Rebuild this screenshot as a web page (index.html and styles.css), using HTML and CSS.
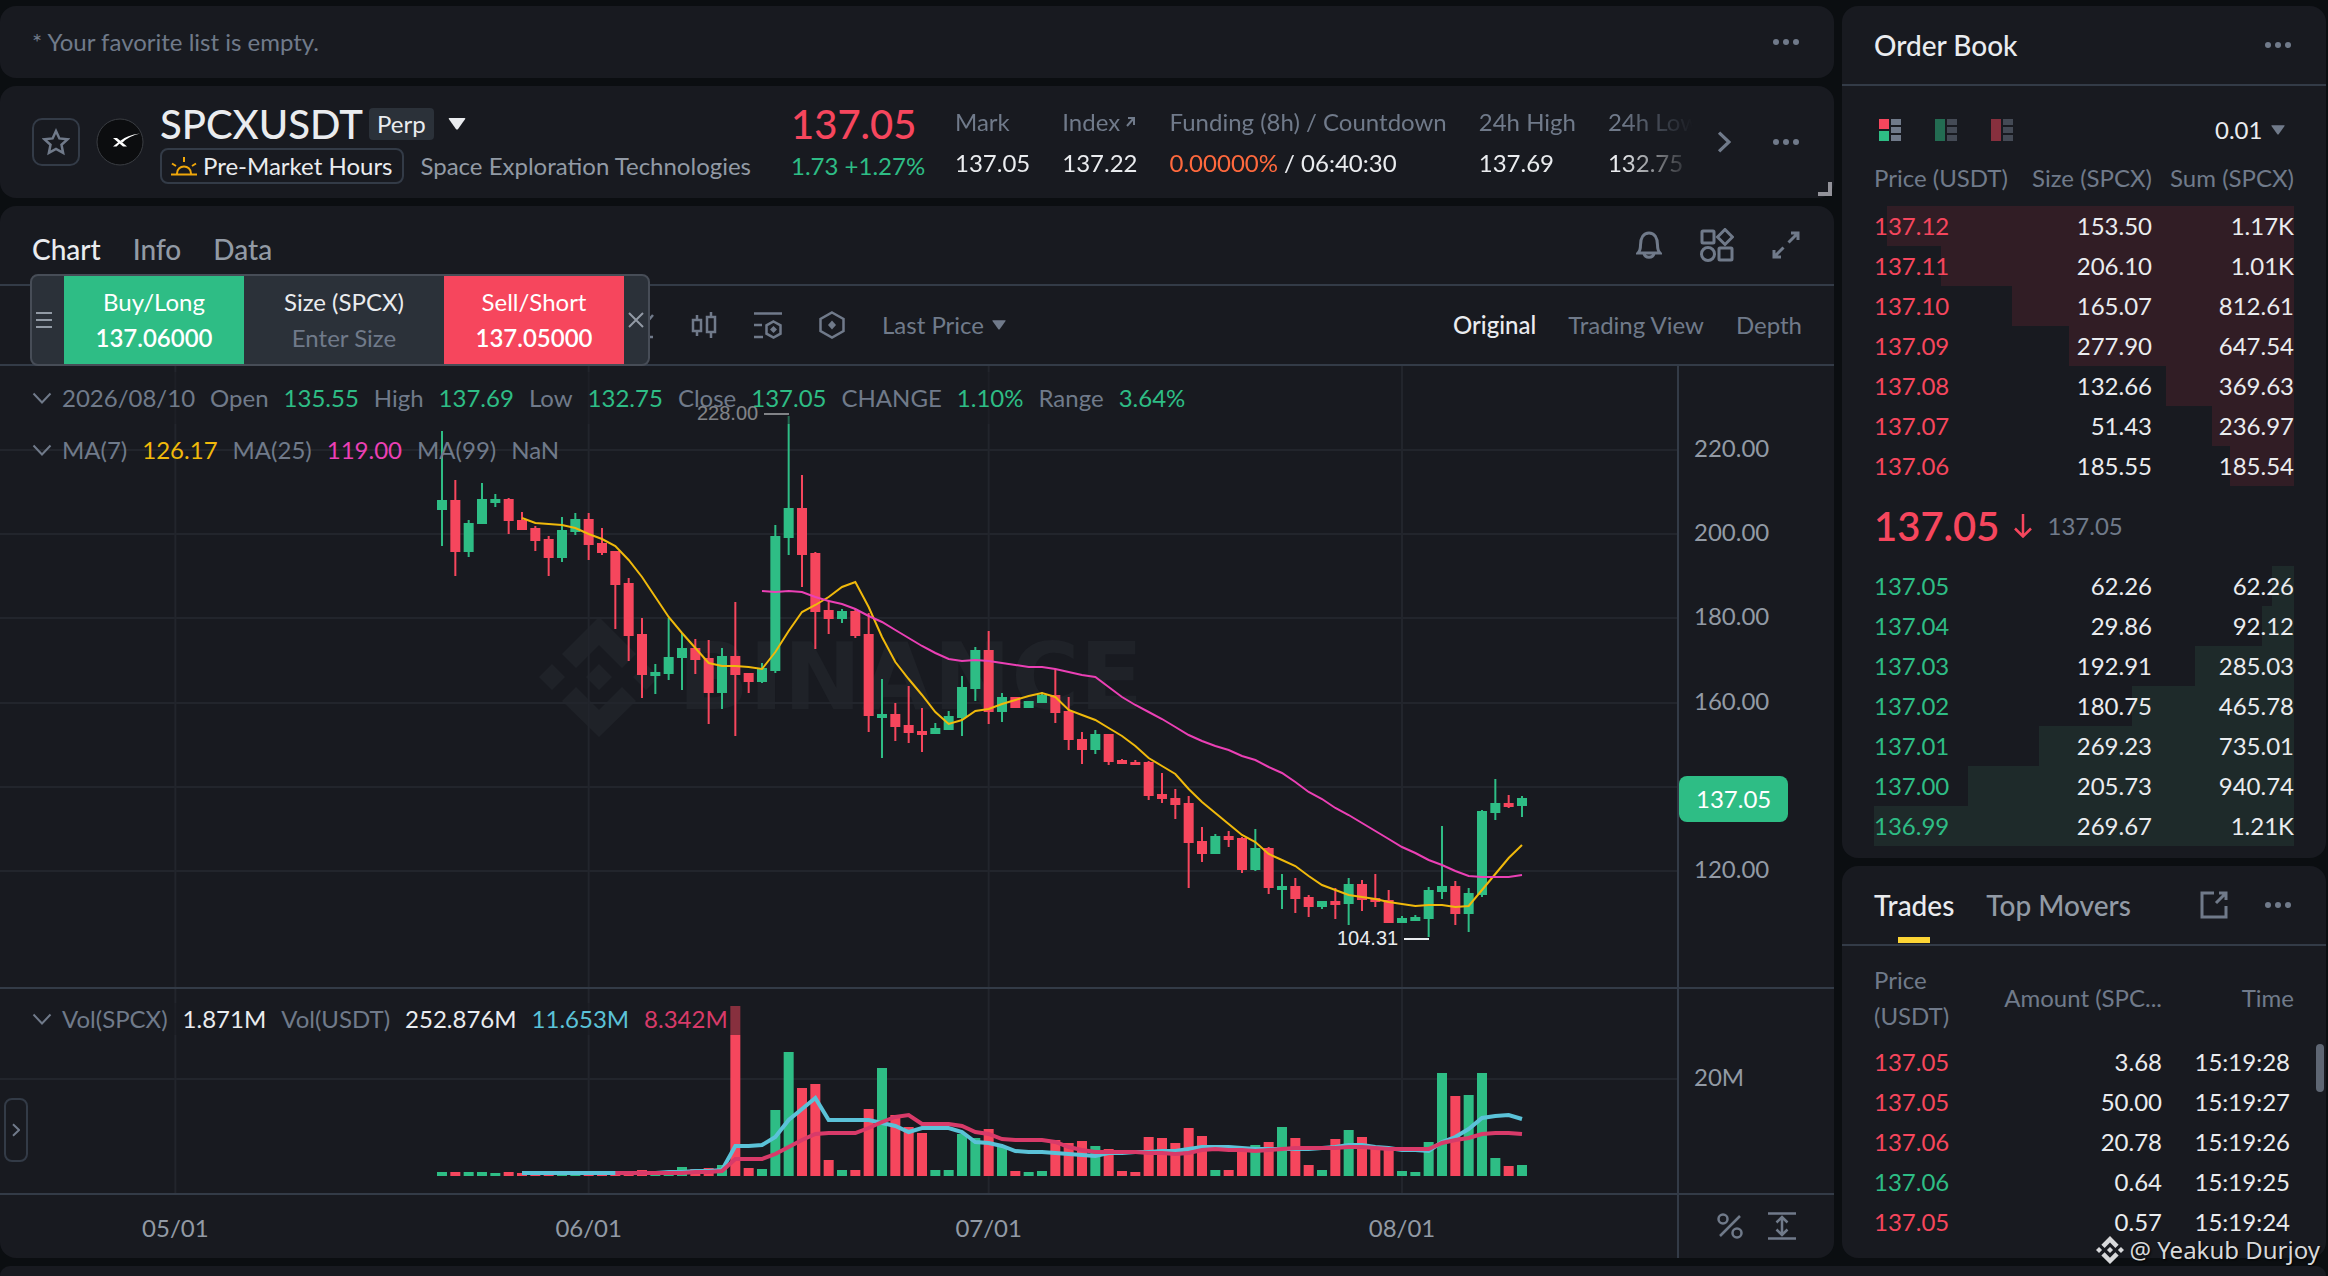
FILE: index.html
```
<!DOCTYPE html>
<html lang="en">
<head>
    <meta charset="UTF-8">
    <meta name="viewport" content="width=device-width, initial-scale=1.0">
    <title>SPCXUSDT Perp | Futures</title>
    <link rel="stylesheet" href="styles.css">
</head>
<body>
    <!-- Shared icons -->
    <svg class="sprite" aria-hidden="true">
        <symbol id="dots" viewBox="0 0 26 6">
            <circle cx="3" cy="3" r="3"/><circle cx="13" cy="3" r="3"/><circle cx="23" cy="3" r="3"/>
        </symbol>
        <symbol id="caret" viewBox="0 0 16 11"><path d="M1 0h14q1 0 .5 1L9 10q-1 1.200-2 0L.5 1Q0 0 1 0z"/></symbol>
        <symbol id="chevron" viewBox="0 0 20 12"><path d="M1.500 1.500 10 10.500l8.500-9"/></symbol>
        <symbol id="binance" viewBox="0 0 120 120">
            <path d="M60 0l37 37-14 14-23-23-23 23-14-14zM13 47l13 13-13 13L0 60zM60 47l13 13-13 13-13-13zM107 47l13 13-13 13-13-13zM37 70l23 23 23-23 14 14-37 36-37-36z"/>
        </symbol>
    </svg>

    <div class="layout">
        <!-- Favorites bar -->
        <section class="panel favorites">
            <p>* Your favorite list is empty.</p>
            <button class="icon-btn" aria-label="Favorites menu"><svg class="dots"><use href="#dots"/></svg></button>
        </section>

        <!-- Ticker -->
        <section class="panel ticker">
            <button class="star-btn" aria-label="Add to favorites">
                <svg width="28" height="28" viewBox="0 0 28 28"><path d="M14 3l3.400 7.400 8.100.9-6 5.500 1.600 8.100-7.100-4-7.100 4 1.600-8.100-6-5.500 8.100-.9z"/></svg>
            </button>
            <svg class="coin" width="48" height="48" viewBox="0 0 48 48" aria-hidden="true">
                <circle cx="24" cy="24" r="23"/>
                <path class="coin-x" d="M17 20h4l10 8.500h-4zM17 28.500l5.500-4.500 1.500 1.300-3.500 3.200z"/>
                <path class="coin-x" d="M24 23q7-6 20-7.500-11 2.500-17.500 9z"/>
            </svg>
            <div class="pair">
                <div class="pair-row">
                    <h1>SPCXUSDT</h1>
                    <span class="perp">Perp</span>
                    <button class="icon-btn pair-open" aria-label="Choose pair"><svg class="caret-lg"><use href="#caret"/></svg></button>
                </div>
                <div class="pair-row">
                    <span class="hours">
                        <svg width="26" height="20" viewBox="0 0 26 20" aria-hidden="true">
                            <path d="M0 18.500h26M6 17.500c0-9.500 14-9.500 14 0M13 1v5M1 7.500l4 2.500M25 7.500L21 10"/>
                        </svg>
                        Pre-Market Hours
                    </span>
                    <span class="company">Space Exploration Technologies</span>
                </div>
            </div>
            <div class="last">
                <strong class="down">137.05</strong>
                <span class="up">1.73 +1.27%</span>
            </div>
            <dl class="stats">
                <div><dt>Mark</dt><dd>137.05</dd></div>
                <div>
                    <dt>Index <svg width="9" height="10" viewBox="0 0 9 10" aria-hidden="true"><path d="M1 9l7-8M2 1h6v7"/></svg></dt>
                    <dd>137.22</dd>
                </div>
                <div><dt>Funding (8h) / Countdown</dt><dd><span class="funding">0.00000%</span> / 06:40:30</dd></div>
                <div><dt>24h High</dt><dd>137.69</dd></div>
                <div><dt>24h Low</dt><dd>132.75</dd></div>
            </dl>
            <button class="icon-btn stats-next" aria-label="More stats"><svg class="chevron-right"><use href="#chevron"/></svg></button>
            <button class="icon-btn" aria-label="Ticker menu"><svg class="dots"><use href="#dots"/></svg></button>
            <span class="resize"></span>
        </section>

        <!-- Chart -->
        <section class="panel chart">
            <div class="chart-head">
                <nav class="tabs">
                    <a class="active" href="#chart">Chart</a>
                    <a href="#info">Info</a>
                    <a href="#data">Data</a>
                </nav>
                <div class="chart-actions">
                    <button class="icon-btn" aria-label="Alerts">
                        <svg class="line-icon" width="26" height="28" viewBox="0 0 26 28"><path d="M2 22h22c-2-2-2.500-4-2.500-8 0-7-3-12-8.500-12s-8.500 5-8.500 12c0 4-.5 6-2.500 8zM8 22.500c1 5 9 5 10 0"/></svg>
                    </button>
                    <button class="icon-btn" aria-label="Layout">
                        <svg class="line-icon" width="34" height="34" viewBox="0 0 34 34"><rect x="2" y="3" width="12" height="12" rx="1"/><path d="M25 1.500l7.500 7.500-7.500 7.500L17.500 9z"/><circle cx="8" cy="26" r="6.500"/><rect x="19" y="20" width="13" height="12" rx="1"/></svg>
                    </button>
                    <button class="icon-btn" aria-label="Full screen">
                        <svg class="line-icon" width="28" height="28" viewBox="0 0 28 28"><path d="M16.500 11.500L26 2M19 2h7v7M11.500 16.500L2 26M2 19v7h7"/></svg>
                    </button>
                </div>
            </div>

            <div class="toolbar">
                <div class="tools">
                    <button class="icon-btn" aria-label="Chart type">
                        <svg class="line-icon" width="28" height="28" viewBox="0 0 28 28"><path d="M2 20l8-8 6 5L27 4M2 26h25"/></svg>
                    </button>
                    <button class="icon-btn" aria-label="Candles">
                        <svg class="line-icon" width="28" height="28" viewBox="0 0 28 28"><path d="M3 9h8v11H3zM7 4v5M7 20v5M17 6h8v15h-8zM21 1v5M21 21v6"/></svg>
                    </button>
                    <button class="icon-btn" aria-label="Indicators">
                        <svg class="line-icon" width="28" height="28" viewBox="0 0 28 28"><path d="M0 2.500h28M0 14h8M0 26h9M19.500 10.500l7 3.800v8.400l-7 3.800-7-3.800v-8.400z"/><path class="solid" d="M19.500 15l3.500 3.500-3.500 3.500-3.500-3.500z"/></svg>
                    </button>
                    <button class="icon-btn" aria-label="Chart settings">
                        <svg class="line-icon" width="28" height="28" viewBox="0 0 28 28"><path d="M14 1.500L25.500 8v12L14 26.500 2.500 20V8z"/><path class="solid" d="M14 9.500l4 4.500-4 4.500-4-4.500z"/></svg>
                    </button>
                    <label class="picker">
                        <select aria-label="Price source"><option>Last Price</option></select>
                        <svg class="caret"><use href="#caret"/></svg>
                    </label>
                </div>
                <nav class="views">
                    <a class="active" href="#original">Original</a>
                    <a href="#tradingview">Trading View</a>
                    <a href="#depth">Depth</a>
                </nav>
            </div>

            <div class="plots">
                <div class="plot price-plot">
                    <svg class="canvas" id="price-canvas"></svg>
                    <p class="legend legend-ohlc">
                        <svg class="chevron-down"><use href="#chevron"/></svg>
                        <span>2026/08/10</span>
                        <span>Open</span><b class="up">135.55</b>
                        <span>High</span><b class="up">137.69</b>
                        <span>Low</span><b class="up">132.75</b>
                        <span>Close</span><b class="up">137.05</b>
                        <span>CHANGE</span><b class="up">1.10%</b>
                        <span>Range</span><b class="up">3.64%</b>
                    </p>
                    <p class="legend legend-ma">
                        <svg class="chevron-down"><use href="#chevron"/></svg>
                        <span>MA(7)</span><b class="ma7">126.17</b>
                        <span>MA(25)</span><b class="ma25">119.00</b>
                        <span>MA(99)</span><span>NaN</span>
                    </p>
                </div>
                <div class="axis">
                    <svg class="canvas" id="price-axis"></svg>
                    <span class="price-tag">137.05</span>
                </div>
                <div class="plot volume-plot">
                    <svg class="canvas" id="volume-canvas"></svg>
                    <p class="legend legend-vol">
                        <svg class="chevron-down"><use href="#chevron"/></svg>
                        <span>Vol(SPCX)</span><b>1.871M</b>
                        <span>Vol(USDT)</span><b>252.876M</b>
                        <b class="vol7">11.653M</b><b class="vol14">8.342M</b>
                    </p>
                </div>
                <div class="axis volume-axis"><svg class="canvas" id="volume-axis"></svg></div>
                <div class="time-axis"><svg class="canvas" id="time-axis"></svg></div>
                <div class="axis scale-buttons">
                    <button class="icon-btn" aria-label="Percent scale">
                        <svg class="line-icon" width="26" height="26" viewBox="0 0 26 26"><circle cx="6" cy="6" r="4.500"/><circle cx="20" cy="20" r="4.500"/><path d="M23 3L3 23"/></svg>
                    </button>
                    <button class="icon-btn" aria-label="Auto scale">
                        <svg class="line-icon" width="28" height="28" viewBox="0 0 28 28"><path d="M0 1.500h28M0 26.500h28M14 5v18M8.500 10.500L14 5l5.500 5.500M8.500 17.500L14 23l5.500-5.500"/></svg>
                    </button>
                </div>
            </div>

            <!-- Quick order box, floats over the chart -->
            <form class="quick-order">
                <span class="grip"><i></i><i></i><i></i></span>
                <button type="button" class="buy">Buy/Long<b>137.06000</b></button>
                <label class="size">Size (SPCX)<input type="text" placeholder="Enter Size"></label>
                <button type="button" class="sell">Sell/Short<b>137.05000</b></button>
                <button type="button" class="close" aria-label="Close">
                    <svg width="16" height="16" viewBox="0 0 16 16"><path d="M1 1l14 14M15 1L1 15"/></svg>
                </button>
            </form>
            <button class="expand-btn" aria-label="Show drawing tools"><svg class="chevron-right small"><use href="#chevron"/></svg></button>
        </section>

        <aside class="side">
            <!-- Order book -->
            <section class="panel book">
                <header class="side-head">
                    <h2>Order Book</h2>
                    <button class="icon-btn" aria-label="Order book menu"><svg class="dots"><use href="#dots"/></svg></button>
                </header>
                <div class="book-tools">
                    <button class="icon-btn" aria-label="Bids and asks">
                        <svg width="22" height="22" viewBox="0 0 22 22"><path class="ask-fill" d="M0 0h10v10H0z"/><path class="bid-fill" d="M0 12h10v10H0z"/><path class="row-fill" d="M12 0h10v6H12zM12 8h10v6H12zM12 16h10v6H12z"/></svg>
                    </button>
                    <button class="icon-btn dim" aria-label="Bids only">
                        <svg width="22" height="22" viewBox="0 0 22 22"><path class="bid-fill" d="M0 0h10v22H0z"/><path class="row-fill" d="M12 0h10v6H12zM12 8h10v6H12zM12 16h10v6H12z"/></svg>
                    </button>
                    <button class="icon-btn dim" aria-label="Asks only">
                        <svg width="22" height="22" viewBox="0 0 22 22"><path class="ask-fill" d="M0 0h10v22H0z"/><path class="row-fill" d="M12 0h10v6H12zM12 8h10v6H12zM12 16h10v6H12z"/></svg>
                    </button>
                    <label class="picker tick">
                        <select aria-label="Tick size"><option>0.01</option></select>
                        <svg class="caret"><use href="#caret"/></svg>
                    </label>
                </div>
                <table class="orders">
                    <thead>
                        <tr><th>Price (USDT)</th><th>Size (SPCX)</th><th>Sum (SPCX)</th></tr>
                    </thead>
                    <tbody class="asks">
                        <tr style="--depth: 96.900%"><td>137.12</td><td>153.50</td><td>1.17K</td></tr>
                        <tr style="--depth: 84.100%"><td>137.11</td><td>206.10</td><td>1.01K</td></tr>
                        <tr style="--depth: 67.100%"><td>137.10</td><td>165.07</td><td>812.61</td></tr>
                        <tr style="--depth: 53.600%"><td>137.09</td><td>277.90</td><td>647.54</td></tr>
                        <tr style="--depth: 30.500%"><td>137.08</td><td>132.66</td><td>369.63</td></tr>
                        <tr style="--depth: 19.500%"><td>137.07</td><td>51.43</td><td>236.97</td></tr>
                        <tr style="--depth: 15.200%"><td>137.06</td><td>185.55</td><td>185.54</td></tr>
                    </tbody>
                </table>
                <p class="mid">
                    <strong>137.05</strong>
                    <svg width="18" height="24" viewBox="0 0 18 24" aria-hidden="true"><path d="M9 0v22M1 14.500L9 22.500l8-8"/></svg>
                    <span>137.05</span>
                </p>
                <table class="orders">
                    <tbody class="bids">
                        <tr style="--depth: 5.200%"><td>137.05</td><td>62.26</td><td>62.26</td></tr>
                        <tr style="--depth: 7.600%"><td>137.04</td><td>29.86</td><td>92.12</td></tr>
                        <tr style="--depth: 23.600%"><td>137.03</td><td>192.91</td><td>285.03</td></tr>
                        <tr style="--depth: 38.500%"><td>137.02</td><td>180.75</td><td>465.78</td></tr>
                        <tr style="--depth: 60.700%"><td>137.01</td><td>269.23</td><td>735.01</td></tr>
                        <tr style="--depth: 77.700%"><td>137.00</td><td>205.73</td><td>940.74</td></tr>
                        <tr style="--depth: 100%"><td>136.99</td><td>269.67</td><td>1.21K</td></tr>
                    </tbody>
                </table>
            </section>

            <!-- Trades -->
            <section class="panel trades">
                <header class="side-head">
                    <nav class="tabs">
                        <a class="active marked" href="#trades">Trades</a>
                        <a href="#movers">Top Movers</a>
                    </nav>
                    <button class="icon-btn popout" aria-label="Open in new window">
                        <svg class="line-icon" width="28" height="28" viewBox="0 0 28 28"><path d="M14 2H2v24h24V15M16 12L26 2M19 2h7v7"/></svg>
                    </button>
                    <button class="icon-btn" aria-label="Trades menu"><svg class="dots"><use href="#dots"/></svg></button>
                </header>
                <table class="trade-list">
                    <thead>
                        <tr><th>Price (USDT)</th><th>Amount (SPC...</th><th>Time</th></tr>
                    </thead>
                    <tbody>
                        <tr><td class="down">137.05</td><td>3.68</td><td>15:19:28</td></tr>
                        <tr><td class="down">137.05</td><td>50.00</td><td>15:19:27</td></tr>
                        <tr><td class="down">137.06</td><td>20.78</td><td>15:19:26</td></tr>
                        <tr><td class="up">137.06</td><td>0.64</td><td>15:19:25</td></tr>
                        <tr><td class="down">137.05</td><td>0.57</td><td>15:19:24</td></tr>
                    </tbody>
                </table>
                <span class="scroll-thumb"></span>
            </section>
        </aside>

        <section class="panel positions"></section>
    </div>

    <p class="credit"><svg width="28" height="28" aria-hidden="true"><use href="#binance"/></svg>@ Yeakub Durjoy</p>

    <script src="script.js"></script>
</body>
</html>
```
FILE: styles.css
```
* {
    margin: 0;
    padding: 0;
    box-sizing: border-box;
}

:root {
    --bg: #0b0e11;
    --panel: #181a20;
    --line: #333b47;
    --grid: #22252c;
    --text: #eaecef;
    --muted: #707a8a;
    --soft: #929aa5;
    --up: #2ebd85;
    --down: #f6465d;
    --box: #2b3139;
}

body {
    background: var(--bg);
    color: var(--text);
    font: 400 24px/32px Lato, "Open Sans", sans-serif;
    overflow: hidden;
}

button, input, select {
    font: inherit;
    color: inherit;
    background: none;
    border: 0;
    appearance: none;
}

a {
    color: inherit;
    text-decoration: none;
}

svg {
    display: block;
    flex: none;
}

.sprite {
    position: absolute;
    width: 0;
    height: 0;
}

.up { color: var(--up); }
.down { color: var(--down); }

/* Page grid */
.layout {
    display: grid;
    grid-template-columns: minmax(0, 1fr) 484px;
    grid-template-rows: 72px 112px minmax(0, 1fr) 10px;
    gap: 8px;
    height: 100vh;
    padding: 6px 2px 0 0;
}

.panel {
    position: relative;
    background: var(--panel);
    border-radius: 16px;
}

.side {
    grid-column: 2;
    grid-row: 1 / 4;
    display: flex;
    flex-direction: column;
    gap: 8px;
}

.positions {
    grid-column: 1 / 3;
    border-radius: 16px 16px 0 0;
}

/* Small controls */
.icon-btn {
    display: flex;
    align-items: center;
    justify-content: center;
    color: var(--muted);
}

.dots {
    width: 26px;
    height: 6px;
    fill: var(--muted);
}

.line-icon {
    fill: none;
    stroke: var(--muted);
    stroke-width: 3;
}

.line-icon .solid {
    fill: var(--muted);
    stroke: none;
}

.caret {
    width: 14px;
    height: 10px;
    fill: var(--muted);
}

.caret-lg {
    width: 18px;
    height: 12px;
    fill: var(--text);
}

.chevron-down, .chevron-right {
    width: 20px;
    height: 12px;
    fill: none;
    stroke: var(--muted);
    stroke-width: 2;
}

.chevron-right {
    width: 22px;
    height: 14px;
    stroke-width: 3;
    transform: rotate(-90deg);
}

.chevron-right.small {
    width: 14px;
    height: 8px;
}

.picker {
    display: flex;
    align-items: center;
    gap: 8px;
}

/* Favorites */
.favorites {
    display: flex;
    align-items: center;
    justify-content: space-between;
    padding: 0 35px 0 32px;
    color: var(--muted);
}

/* Ticker */
.ticker {
    display: flex;
    align-items: center;
    padding: 0 35px 0 32px;
}

.star-btn {
    display: grid;
    place-items: center;
    width: 48px;
    height: 48px;
    border: 2px solid var(--line);
    border-radius: 10px;
}

.star-btn svg {
    fill: none;
    stroke: var(--muted);
    stroke-width: 2.500;
}

.coin {
    margin: 0 16px;
    fill: #0c0d0f;
    stroke: #3a3d42;
}

.coin-x {
    fill: #fff;
    stroke: none;
}

.pair, .last {
    display: flex;
    flex-direction: column;
    gap: 6px;
    padding-top: 6px;
    line-height: 36px;
}

.pair {
    width: 631px;
}

.pair-row {
    display: flex;
    align-items: center;
    height: 36px;
}

h1, .last strong, .mid strong {
    font-size: 40px;
    font-weight: 500;
}

.perp {
    margin-left: 6px;
    padding: 0 8px;
    border-radius: 4px;
    background: var(--box);
    line-height: 32px;
}

.pair-open {
    margin-left: 14px;
}

.hours {
    display: flex;
    align-items: center;
    gap: 6px;
    height: 36px;
    padding: 0 10px 0 9px;
    border: 2px solid var(--line);
    border-radius: 8px;
}

.hours svg {
    fill: none;
    stroke: #f0a70a;
    stroke-width: 2;
}

.company {
    margin-left: 16px;
    color: var(--soft);
}

.last {
    width: 164px;
}

.stats {
    flex: 1;
    display: flex;
    gap: 32px;
    min-width: 0;
    overflow: hidden;
    white-space: nowrap;
    mask-image: linear-gradient(to left, transparent 4px, #000 76px);
}

.stats > div {
    display: flex;
    flex-direction: column;
    gap: 9px;
}

.stats dt {
    display: flex;
    align-items: center;
    gap: 6px;
    color: var(--muted);
}

.stats dt svg {
    fill: none;
    stroke: var(--muted);
    stroke-width: 2;
}

.funding {
    color: #ff693d;
}

.stats-next {
    width: 54px;
    margin-right: 22px;
}

.resize {
    position: absolute;
    right: 2px;
    bottom: 2px;
    width: 14px;
    height: 14px;
    border: solid #929299;
    border-width: 0 4px 4px 0;
}

/* Chart header */
.chart {
    display: flex;
    flex-direction: column;
}

.chart-head, .toolbar {
    display: flex;
    align-items: center;
    justify-content: space-between;
    height: 80px;
    padding: 0 32px;
    border-bottom: 2px solid var(--line);
}

.chart-head {
    padding-top: 8px;
}

.tabs {
    display: flex;
    gap: 32px;
    font-size: 28px;
    font-weight: 500;
    color: var(--soft);
}

.tabs .active, .views .active {
    color: var(--text);
}

.chart-actions {
    display: flex;
    align-items: center;
    gap: 38px;
    padding: 0 2px 8px 0;
}

.tools {
    display: flex;
    align-items: center;
    gap: 36px;
    padding-left: 594px;
    color: var(--muted);
}

.tools .line-icon {
    stroke-width: 2.500;
}

.views {
    display: flex;
    gap: 32px;
    color: var(--muted);
}

.views .active {
    font-weight: 500;
}

/* Plots */
.plots {
    flex: 1;
    display: grid;
    grid-template-columns: minmax(0, 1fr) 157px;
    grid-template-rows: minmax(0, 1fr) 206px 65px;
}

.plot, .axis {
    position: relative;
    min-height: 0;
}

.axis {
    border-left: 2px solid var(--line);
}

.volume-plot, .volume-axis, .time-axis, .scale-buttons {
    border-top: 2px solid var(--line);
}

.canvas {
    width: 100%;
    height: 100%;
}

.grid-line {
    stroke: var(--grid);
    stroke-width: 2;
}

.candle-up { fill: var(--up); }
.candle-down { fill: var(--down); }

.average {
    fill: none;
    stroke-width: 2;
}

.average.thick { stroke-width: 4; }
.average.ma7 { stroke: #f0b90b; }
.average.ma25 { stroke: #eb40b5; }
.average.vol7 { stroke: #5bc2d8; }
.average.vol14 { stroke: #d83a69; }

.brand {
    fill: #1f2228;
}

.brand text {
    font: 700 93px "DejaVu Sans", sans-serif;
}

.extreme text {
    fill: var(--text);
    font: 20px "Liberation Sans", sans-serif;
}

.extreme line {
    stroke: var(--text);
    stroke-width: 2;
}

.axis-label {
    fill: var(--soft);
}

.price-tag {
    position: absolute;
    left: 0;
    top: 410px;
    padding: 7px 17px;
    border-radius: 8px;
    background: var(--up);
    color: #fff;
}

.scale-buttons {
    display: flex;
    align-items: center;
    gap: 25px;
    padding: 0 0 2px 38px;
}

.scale-buttons .line-icon {
    stroke-width: 2.500;
}

/* Legends lie over the plots */
.legend {
    position: absolute;
    left: 32px;
    display: flex;
    align-items: center;
    gap: 15px;
    color: var(--muted);
    background: rgba(24, 26, 32, 0.5);
}

.legend .chevron-down {
    margin-right: -5px;
}

.legend b {
    font-weight: 400;
}

.legend-ohlc {
    top: 6px;
    height: 52px;
}

.legend-ma {
    top: 68px;
    background: none;
}

.legend-vol {
    top: 14px;
    padding-right: 16px;
}

.legend-vol b:not([class]) { color: var(--text); }
.legend .ma7 { color: #f0b90b; }
.legend .ma25 { color: #eb40b5; }
.legend .vol7 { color: #5bc2d8; }
.legend .vol14 { color: #d83a69; }

/* Quick order */
.quick-order {
    position: absolute;
    left: 30px;
    top: 68px;
    display: flex;
    height: 92px;
    border: 2px solid #474d57;
    border-radius: 8px;
    background: var(--box);
    overflow: hidden;
    text-align: center;
    line-height: 36px;
}

.grip {
    display: flex;
    flex-direction: column;
    justify-content: center;
    align-items: center;
    gap: 5px;
    width: 32px;
    padding-right: 8px;
}

.grip i {
    width: 16px;
    height: 2px;
    background: var(--soft);
}

.buy, .sell, .size {
    display: flex;
    flex-direction: column;
    justify-content: center;
    align-items: center;
    width: 180px;
}

.buy, .sell {
    color: #fff;
}

.buy { background: var(--up); }
.sell { background: var(--down); }

.buy b, .sell b {
    font-weight: 600;
}

.size {
    width: 200px;
}

.size input {
    width: 100%;
    height: 36px;
    text-align: center;
}

.size input::placeholder {
    color: var(--muted);
}

.close {
    display: grid;
    place-items: center;
    width: 24px;
}

.close svg {
    stroke: var(--soft);
    stroke-width: 2;
}

.expand-btn {
    position: absolute;
    left: 4px;
    bottom: 96px;
    display: grid;
    place-items: center;
    width: 24px;
    height: 64px;
    border: 2px solid var(--line);
    border-radius: 8px;
}

/* Order book */
.side-head {
    display: flex;
    align-items: center;
    height: 80px;
    padding: 0 35px 0 32px;
    border-bottom: 2px solid var(--line);
}

.side-head .icon-btn:last-child {
    margin-left: auto;
}

.side-head h2 {
    font-size: 28px;
    font-weight: 500;
}

.book {
    padding-bottom: 12px;
}

.book-tools {
    display: flex;
    align-items: center;
    gap: 34px;
    height: 40px;
    margin: 24px 41px 0 37px;
}

.ask-fill { fill: var(--down); }
.bid-fill { fill: var(--up); }
.row-fill { fill: var(--muted); }

.dim {
    opacity: 0.5;
}

.tick {
    margin-left: auto;
}

table {
    width: 420px;
    margin: 0 32px;
    table-layout: fixed;
    border-collapse: collapse;
}

th {
    font-weight: 400;
    text-align: right;
    white-space: nowrap;
    color: var(--muted);
}

td {
    height: 40px;
    text-align: right;
}

th:first-child, td:first-child {
    text-align: left;
}

.orders th {
    height: 56px;
}

.orders :is(th, td):first-child {
    width: 136px;
}

.asks tr {
    --tint: #311d25;
}

.bids tr {
    --tint: #1e2a2a;
}

.orders tbody tr {
    background: linear-gradient(to left, var(--tint) var(--depth), transparent var(--depth));
}

.asks td:first-child { color: var(--down); }
.bids td:first-child { color: var(--up); }

.mid {
    display: flex;
    align-items: center;
    gap: 15px;
    height: 80px;
    padding-left: 32px;
    color: var(--muted);
}

.mid strong {
    font-weight: 600;
    color: var(--down);
}

.mid svg {
    fill: none;
    stroke: var(--down);
    stroke-width: 2.500;
}

/* Trades */
.trades {
    flex: 1;
}

.marked {
    position: relative;
}

.marked::after {
    content: "";
    position: absolute;
    left: 50%;
    bottom: -22px;
    width: 32px;
    height: 6px;
    margin-left: -16px;
    background: #fcd535;
}

.popout {
    margin-left: auto;
}

.side-head .popout + .icon-btn {
    margin-left: 37px;
}

.trade-list th {
    height: 96px;
    padding-top: 8px;
    line-height: 36px;
}

.trade-list th:first-child {
    width: 100px;
    white-space: normal;
}

.trade-list th:nth-child(2) {
    width: 188px;
}

.trade-list td:last-child {
    padding-right: 4px;
}

.scroll-thumb {
    position: absolute;
    right: 2px;
    top: 178px;
    width: 8px;
    height: 48px;
    border-radius: 4px;
    background: #5e6673;
}

.credit {
    position: absolute;
    right: 8px;
    bottom: 10px;
    display: flex;
    align-items: center;
    gap: 5px;
    font: 24px/32px "Noto Sans", sans-serif;
    color: #d8d9db;
    text-shadow: 1px 1px 2px #000;
}

.credit svg {
    fill: #d8d9db;
}
```
FILE: script.js
```
// Each candle: direction, high, body top, body bottom, low (y in the price plot), volume bar height
const candles = [
    ['u', 65, 134, 144, 180, 4], ['d', 114, 134, 186, 210, 4], ['u', 154, 157, 186, 191, 4],
    ['u', 117, 133, 158, 158, 4], ['u', 128, 133, 137, 141, 3], ['d', 132, 133, 155, 168, 4],
    ['d', 146, 154, 164, 164, 3], ['d', 160, 162, 175, 185, 3], ['d', 170, 173, 192, 210, 3],
    ['u', 151, 164, 192, 196, 3], ['u', 147, 153, 166, 169, 3], ['d', 147, 153, 179, 194, 4],
    ['d', 162, 177, 187, 189, 3], ['d', 185, 185, 219, 263, 4], ['d', 212, 217, 270, 295, 4],
    ['d', 252, 268, 309, 332, 6], ['u', 298, 306, 310, 328, 4], ['u', 252, 291, 308, 314, 5],
    ['u', 267, 282, 292, 324, 9], ['d', 273, 282, 294, 308, 7], ['d', 274, 292, 327, 358, 8],
    ['u', 282, 290, 327, 343, 11], ['d', 236, 290, 309, 370, 170], ['d', 307, 307, 316, 327, 8],
    ['u', 297, 302, 316, 317, 7], ['u', 159, 170, 305, 307, 66], ['u', 50, 142, 172, 189, 124],
    ['d', 109, 142, 189, 221, 88], ['d', 186, 187, 246, 283, 92], ['d', 234, 244, 253, 268, 16],
    ['u', 243, 245, 253, 257, 6], ['d', 243, 245, 270, 272, 6], ['d', 247, 268, 350, 366, 67],
    ['u', 313, 348, 352, 392, 108], ['d', 337, 348, 361, 375, 61], ['d', 320, 359, 367, 377, 49],
    ['d', 342, 365, 369, 386, 43], ['u', 357, 362, 368, 368, 6], ['u', 345, 350, 364, 364, 6],
    ['u', 310, 321, 352, 370, 42], ['u', 281, 284, 323, 335, 38], ['d', 265, 284, 346, 358, 47],
    ['u', 327, 331, 346, 356, 29], ['d', 331, 331, 342, 342, 5], ['u', 335, 335, 342, 342, 4],
    ['u', 326, 329, 337, 337, 5], ['d', 303, 329, 347, 357, 36], ['d', 331, 345, 374, 384, 33],
    ['d', 366, 373, 384, 398, 35], ['u', 364, 368, 384, 388, 30], ['d', 368, 368, 396, 399, 27],
    ['d', 393, 394, 398, 398, 5], ['d', 394, 396, 399, 399, 4], ['d', 395, 396, 430, 434, 39],
    ['d', 407, 428, 433, 437, 38], ['d', 423, 432, 439, 453, 33], ['d', 430, 437, 477, 522, 48],
    ['d', 461, 475, 488, 496, 40], ['u', 468, 470, 488, 488, 6], ['d', 465, 470, 474, 481, 6],
    ['d', 471, 472, 504, 507, 26], ['u', 463, 482, 504, 505, 31], ['d', 481, 482, 522, 528, 34],
    ['u', 508, 520, 524, 543, 49], ['d', 512, 520, 533, 547, 38], ['d', 529, 531, 541, 551, 11],
    ['u', 535, 535, 541, 543, 6], ['d', 522, 535, 539, 553, 37], ['u', 512, 518, 538, 559, 46],
    ['d', 514, 518, 534, 545, 39], ['d', 508, 532, 536, 541, 27], ['d', 524, 534, 557, 557, 26],
    ['u', 550, 552, 557, 557, 5], ['u', 549, 551, 555, 555, 4], ['u', 521, 524, 553, 571, 34],
    ['u', 460, 520, 526, 533, 103], ['d', 515, 520, 548, 559, 80], ['u', 522, 527, 548, 566, 81],
    ['u', 444, 445, 529, 531, 103], ['u', 413, 437, 447, 454, 18], ['d', 429, 437, 441, 442, 10],
    ['u', 430, 432, 440, 451, 11]
];

// Moving averages, one y per candle from the given start
const ma7 = { start: 6, ys: [152, 157, 158, 159, 162, 168, 173, 180, 194, 211, 231, 251, 267, 282, 297, 300, 300, 301, 303, 286, 265, 246, 239, 231, 221, 216, 241, 271, 296, 313, 329, 346, 358, 354, 345, 343, 338, 334, 330, 327, 331, 344, 349, 354, 362, 370, 380, 392, 400, 408, 423, 436, 447, 458, 469, 476, 488, 494, 500, 510, 519, 524, 529, 531, 533, 536, 538, 540, 539, 539, 541, 540, 524, 508, 492, 479] };
const ma25 = { start: 24, ys: [225, 226, 225, 226, 231, 235, 238, 243, 250, 256, 264, 272, 280, 287, 293, 295, 294, 295, 297, 299, 301, 301, 303, 306, 309, 311, 321, 331, 339, 346, 353, 361, 369, 375, 380, 384, 390, 394, 401, 407, 416, 426, 433, 442, 449, 457, 465, 473, 481, 487, 494, 499, 505, 510, 511, 511, 511, 509] };
const vol7 = { start: 6, ys: [184, 184, 184, 184, 184, 184, 184, 184, 184, 184, 184, 183, 183, 182, 182, 181, 157, 157, 156, 148, 131, 120, 109, 131, 131, 131, 131, 134, 137, 143, 139, 139, 139, 143, 153, 154, 157, 162, 163, 163, 164, 165, 166, 167, 164, 164, 163, 163, 162, 162, 160, 158, 158, 158, 159, 160, 160, 160, 160, 160, 159, 158, 156, 156, 158, 159, 161, 161, 162, 153, 148, 140, 129, 127, 126, 130] };
const vol14 = { start: 13, ys: [184, 184, 184, 184, 184, 184, 183, 183, 182, 170, 170, 170, 165, 158, 151, 145, 144, 144, 144, 139, 133, 128, 126, 135, 135, 135, 137, 143, 145, 150, 151, 151, 151, 153, 158, 161, 163, 163, 163, 163, 164, 164, 165, 164, 161, 160, 161, 161, 162, 161, 160, 159, 159, 159, 159, 158, 158, 159, 160, 160, 160, 160, 154, 151, 149, 145, 144, 144, 145] };

const priceLines = [84, 168, 252, 337, 421, 505];
const priceLabels = [['220.00', 81], ['200.00', 165], ['180.00', 249], ['160.00', 334], ['120.00', 502]];
const dates = [['05/01', -20], ['06/01', 11], ['07/01', 41], ['08/01', 72]];
const volumeBase = 187;

function x(index) {
    return 442 + index * 40 / 3;
}

function rect(cls, left, top, width, height) {
    return `<rect class="${cls}" x="${left}" y="${top}" width="${width}" height="${height}"/>`;
}

function hLine(y) {
    return `<line class="grid-line" x1="0" x2="100%" y1="${y}" y2="${y}"/>`;
}

function vLines() {
    return dates.map(d => `<line class="grid-line" x1="${x(d[1])}" x2="${x(d[1])}" y1="0" y2="100%"/>`).join('');
}

function average(cls, series) {
    const points = series.ys.map((y, i) => `${x(series.start + i)},${y}`).join(' ');
    return `<polyline class="average ${cls}" points="${points}"/>`;
}

function label(text, left, y, anchor) {
    return `<text class="axis-label" x="${left}" y="${y}" text-anchor="${anchor}" dominant-baseline="central">${text}</text>`;
}

function draw(id, markup) {
    document.getElementById(id).innerHTML = markup;
}

let bodies = '';
let bars = '';
candles.forEach(([dir, high, top, bottom, low, volume], i) => {
    const cls = dir === 'u' ? 'candle-up' : 'candle-down';
    bodies += rect(cls, x(i) - 1, high, 2, low - high);
    bodies += rect(cls, x(i) - 5, top, 10, bottom - top);
    bars += rect(cls, x(i) - 5, volumeBase - volume, 10, volume);
});

draw('price-canvas',
    `<g class="brand"><use href="#binance" x="539" y="251" width="120" height="120"/><text x="678" y="343">BINANCE</text></g>`
    + priceLines.map(hLine).join('') + vLines() + bodies
    + average('ma7', ma7) + average('ma25', ma25)
    + `<g class="extreme"><text x="697" y="54">228.00</text><line x1="764" x2="789" y1="48" y2="48"/>`
    + `<text x="1337" y="579">104.31</text><line x1="1404" x2="1429" y1="573" y2="573"/></g>`);
draw('price-axis', priceLabels.map(([text, y]) => label(text, 15, y, 'start')).join(''));
draw('volume-canvas', hLine(90) + vLines() + bars + average('thick vol7', vol7) + average('thick vol14', vol14));
draw('volume-axis', label('20M', 15, 87, 'start'));
draw('time-axis', dates.map(d => label(d[0], x(d[1]), 32, 'middle')).join(''));
```
